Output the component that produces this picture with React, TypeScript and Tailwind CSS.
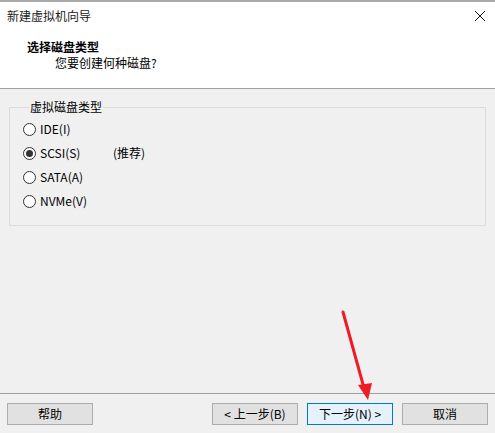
import React from "react";

const font = { fontFamily: '"Microsoft YaHei", "Noto Sans CJK SC", "Noto Sans", sans-serif' };

function Radio({ label, checked, extra }: { label: string; checked?: boolean; extra?: string }) {
  return (
    <div className="flex items-center h-[24px]">
      <span className="w-[13px] h-[13px] rounded-full border border-[#333333] bg-white flex items-center justify-center">
        {checked && <span className="w-[7px] h-[7px] rounded-full bg-[#333333]" />}
      </span>
      <span className="ml-[4px] text-[12px] text-black w-[73px]">{label}</span>
      {extra && <span className="text-[12px] text-black">{extra}</span>}
    </div>
  );
}

function Btn({ children, primary }: { children: React.ReactNode; primary?: boolean }) {
  return (
    <button
      className={
        "w-[86px] h-[22px] text-[12px] text-black flex items-center justify-center border " +
        (primary ? "bg-[#e5f1fb] border-[#0078d7]" : "bg-[#e1e1e1] border-[#adadad]")
      }
    >
      {children}
    </button>
  );
}

export default function App() {
  return (
    <div className="relative w-[495px] h-[433px] bg-[#f0f0f0] flex flex-col overflow-hidden" style={font}>
      <div className="h-[2px] bg-[#a9a9a9]" />
      <div className="bg-white h-[27px] flex items-center justify-between pl-[7px] pr-[9px]">
        <span className="text-[12px] text-[#1a1a1a]">新建虚拟机向导</span>
        <svg width="12" height="12" viewBox="0 0 12 12">
          <path d="M1 1 L11 11 M11 1 L1 11" stroke="#111" strokeWidth="1" />
        </svg>
      </div>
      <div className="bg-white h-[59px] flex flex-col pt-[10px]">
        <div className="pl-[27px] text-[12px] font-bold text-black leading-[16px]">选择磁盘类型</div>
        <div className="pl-[55px] text-[12px] text-black leading-[16px] mt-[0px]">您要创建何种磁盘?</div>
      </div>
      <div className="h-[1px] bg-[#a0a0a0]" />
      <div className="flex-1 px-[9px] pt-[11px]">
        <fieldset className="border border-[#dcdcdc] pl-[13px] pb-[12px] pt-[3px] m-0">
          <legend className="ml-[6px] px-[1px] text-[12px] text-black leading-[14px]">虚拟磁盘类型</legend>
          <Radio label="IDE(I)" />
          <Radio label="SCSI(S)" checked extra="(推荐)" />
          <Radio label="SATA(A)" />
          <Radio label="NVMe(V)" />
        </fieldset>
      </div>
      <div className="h-[1px] bg-[#a0a0a0]" />
      <div className="h-[39px] flex items-start pt-[9px] px-[7px]">
        <Btn>帮助</Btn>
        <div className="flex-1" />
        <div className="flex gap-[9px]">
          <Btn>&lt; 上一步(B)</Btn>
          <Btn primary>下一步(N) &gt;</Btn>
          <Btn>取消</Btn>
        </div>
      </div>
      <svg className="absolute left-0 top-0 pointer-events-none" width="495" height="433">
        <line x1="343" y1="312" x2="364" y2="388" stroke="#ee1c25" strokeWidth="3" strokeLinecap="round" />
        <polygon points="358,385 372,383 368,400" fill="#ee1c25" />
      </svg>
    </div>
  );
}
